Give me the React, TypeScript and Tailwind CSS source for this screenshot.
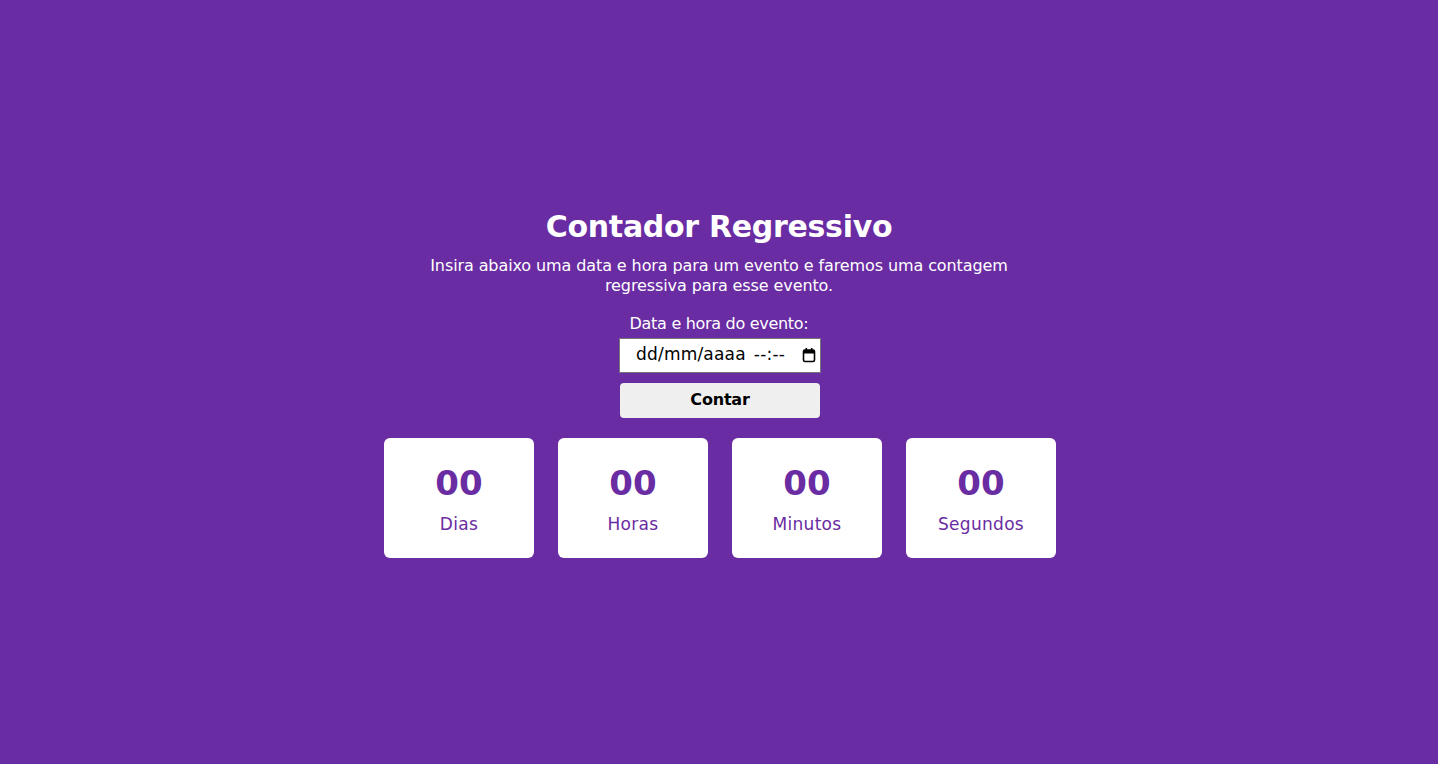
import React from "react";

const units = ["Dias", "Horas", "Minutos", "Segundos"];

export default function App() {
  return (
    <div
      className="min-h-[764px] w-full bg-[#6a2ca2] flex flex-col items-center justify-center text-white"
      style={{ fontFamily: '"DejaVu Sans", "Noto Sans", sans-serif' }}
    >
      <h1 className="text-[30px] leading-[40px] font-bold tracking-[-0.3px]">Contador Regressivo</h1>
      <p className="mt-[9px] text-[16px] leading-[20px] text-center tracking-[-0.1px]">
        Insira abaixo uma data e hora para um evento e faremos uma contagem
        <br />
        regressiva para esse evento.
      </p>
      <div className="mt-[18px] text-[16px] leading-[19px] tracking-[-0.3px]">Data e hora do evento:</div>
      <div className="mt-[5px] ml-[2px] w-[202px] h-[35px] bg-white border border-[#767676] flex items-center text-black text-[17px] tracking-[0.2px]">
        <span className="ml-[16px]">dd/mm/aaaa</span>
        <span className="ml-[8px]">--:--</span>
        <svg className="ml-auto mr-[4px]" width="14" height="16" viewBox="0 0 14 16">
          <rect x="1.5" y="3" width="11" height="11.5" rx="1.5" fill="none" stroke="#000" strokeWidth="1.6" />
          <rect x="1.5" y="3" width="11" height="3.5" fill="#000" />
          <rect x="3.5" y="1" width="1.6" height="3" fill="#000" />
          <rect x="8.9" y="1" width="1.6" height="3" fill="#000" />
        </svg>
      </div>
      <button className="mt-[10px] ml-[2px] w-[200px] h-[35px] rounded-[4px] bg-[#efefef] text-black text-[16px] font-bold tracking-[-0.2px]">
        Contar
      </button>
      <div className="mt-[20px] flex gap-[24px] pl-[2px]">
        {units.map((u) => (
          <div
            key={u}
            className="w-[150px] h-[120px] bg-white rounded-[6px] flex flex-col items-center text-[#6a2ca2]"
          >
            <div className="mt-[24px] text-[34px] leading-[42px] font-bold">00</div>
            <div className="mt-[10px] text-[17px] leading-[20px] tracking-[0.3px]">{u}</div>
          </div>
        ))}
      </div>
    </div>
  );
}
